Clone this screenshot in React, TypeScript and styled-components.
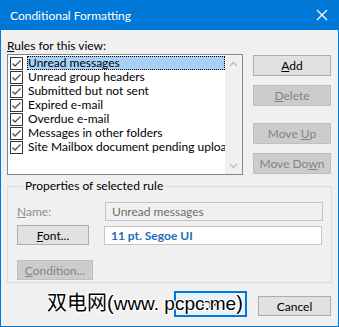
import styled, { createGlobalStyle } from "styled-components";

const Global = createGlobalStyle`
    html, body { margin:0; padding:0; background:#ffffff; }
    body { font-family:"Lato", "Liberation Sans", sans-serif; font-size:12px; color:#000; }
`;

const Window = styled.div`
    position:relative;
    width:339px;
    height:327px;
    box-sizing:border-box;
    border:1px solid #0078d7;
    border-top:0;
    background:#f0f0f0;
    display:flex;
    flex-direction:column;
`;

const TitleBar = styled.div`
    height:30px;
    margin:0 -1px;
    background:#0078d7;
    color:#fff;
    display:flex;
    align-items:center;
    justify-content:space-between;
    padding:0 11px 0 10px;
    font-size:12px;
`;

const Body = styled.div`
    padding:8px 6px 0 6px;
    display:flex;
    flex-direction:column;
`;

const TopRow = styled.div`
    display:flex;
`;

const ListColumn = styled.div`
    width:236px;
    display:flex;
    flex-direction:column;
`;

const Label = styled.div<{ $disabled?: boolean }>`
    height:16px;
    line-height:15px;
    color:${p => p.$disabled ? "#8d8d8d" : "#000"};
`;

const ListBox = styled.div`
    height:121px;
    box-sizing:border-box;
    border:1px solid #828790;
    background:#fff;
    display:flex;
`;

const Rows = styled.div`
    flex:1;
    min-width:0;
    padding:1px 0 0 2px;
    overflow:hidden;
`;

const Row = styled.div`
    height:14px;
    display:flex;
    align-items:center;
    white-space:nowrap;
    svg { flex-shrink:0; }
`;

const RowText = styled.span<{ $selected?: boolean }>`
    margin-left:4px;
    flex:1;
    min-width:0;
    overflow:hidden;
    height:14px;
    line-height:13px;
    padding-left:1px;
    box-sizing:border-box;
    background:${p => p.$selected ? "#a9d0f5" : "transparent"};
    outline:${p => p.$selected ? "1px dotted #000" : "none"};
    outline-offset:-1px;
`;

const ScrollBar = styled.div`
    width:17px;
    flex-shrink:0;
    background:#f0f0f0;
    display:flex;
    flex-direction:column;
    justify-content:space-between;
    align-items:center;
    padding:6px 0 5px;
`;

const ButtonColumn = styled.div`
    margin-left:10px;
    padding-top:17px;
    display:flex;
    flex-direction:column;
`;

const Button = styled.div<{ $disabled?: boolean; $w?: number; $h?: number; $gap?: number }>`
    width:${p => p.$w ?? 78}px;
    height:${p => p.$h ?? 21}px;
    margin-top:${p => p.$gap ?? 0}px;
    flex-shrink:0;
    box-sizing:border-box;
    border:1px solid ${p => p.$disabled ? "#bfbfbf" : "#adadad"};
    background:${p => p.$disabled ? "#cccccc" : "#e1e1e1"};
    color:${p => p.$disabled ? "#838383" : "#000"};
    display:flex;
    align-items:center;
    justify-content:center;
`;

const Group = styled.fieldset`
    margin:4px 0 0 0;
    padding:3px 8px 5px 9px;
    height:104px;
    box-sizing:border-box;
    border:1px solid #dcdcdc;
    display:flex;
    flex-direction:column;
`;

const Legend = styled.legend`
    padding:0 2px;
    margin-left:6px;
    line-height:14px;
`;

const FieldRow = styled.div<{ $gap?: number }>`
    display:flex;
    align-items:center;
    margin-top:${p => p.$gap ?? 0}px;
`;

const NameLabel = styled(Label)`
    width:88px;
`;

const Field = styled.div<{ $disabled?: boolean }>`
    width:218px;
    height:19px;
    box-sizing:border-box;
    display:flex;
    align-items:center;
    padding-left:6px;
    border:1px solid ${p => p.$disabled ? "#b2c8de" : "#c5c5c5"};
    background:${p => p.$disabled ? "#f0f0f0" : "#fff"};
    color:${p => p.$disabled ? "#6d6d6d" : "#1f6db8"};
    font-weight:${p => p.$disabled ? 400 : 700};
`;

const Footer = styled.div`
    display:flex;
    justify-content:flex-end;
    align-items:flex-end;
    gap:11px;
    padding:8px 1px 0 0;
`;

const OkButton = styled.div`
    width:73px;
    height:26px;
    box-sizing:border-box;
    border:2px solid #0078d7;
    background:#e5f1fb;
    display:flex;
    align-items:center;
    justify-content:center;
`;

const CancelButton = styled(Button)`
    margin-bottom:1px;
`;

const Watermark = styled.div`
    position:absolute;
    left:46px;
    top:289px;
    font-family:"Liberation Sans", "Noto Sans CJK SC", sans-serif;
    font-size:20px;
    line-height:28px;
    color:#000;
    white-space:nowrap;
    text-shadow:1px 0 #fff, -1px 0 #fff, 0 1px #fff, 0 -1px #fff, 1px 1px #fff, -1px -1px #fff, 1px -1px #fff, -1px 1px #fff;
`;

const WatermarkLatin = styled.span`
    font-size:19px;
`;

function Check() {
    return (
        <svg width="13" height="13" viewBox="0 0 13 13">
            <rect x="0.5" y="0.5" width="12" height="12" fill="#fff" stroke="#333" />
            <path d="M2.5 6.5 L5 9 L10.5 3.5" fill="none" stroke="#555" strokeWidth="1.4" />
        </svg>
    );
}

function Arrow({ up }: { up?: boolean }) {
    return (
        <svg width="9" height="6" viewBox="0 0 9 6">
            <path d={up ? "M1 5 L4.5 1.5 L8 5" : "M1 1 L4.5 4.5 L8 1"} fill="none" stroke="#c2c2c2" strokeWidth="1.6" />
        </svg>
    );
}

const rules = [
    "Unread messages",
    "Unread group headers",
    "Submitted but not sent",
    "Expired e-mail",
    "Overdue e-mail",
    "Messages in other folders",
    "Site Mailbox document pending upload",
];

export default function App() {
    return <>
        <Global />
        <Window>
            <TitleBar>
                <span>Conditional Formatting</span>
                <svg width="12" height="12" viewBox="0 0 12 12">
                    <path d="M1 1 L11 11 M11 1 L1 11" stroke="#fff" strokeWidth="1.2" />
                </svg>
            </TitleBar>
            <Body>
                <TopRow>
                    <ListColumn>
                        <Label><u>R</u>ules for this view:</Label>
                        <ListBox>
                            <Rows>
                                {rules.map((r, i) => (
                                    <Row key={r}>
                                        <Check />
                                        <RowText $selected={i === 0}>{r}</RowText>
                                    </Row>
                                ))}
                            </Rows>
                            <ScrollBar>
                                <Arrow up />
                                <Arrow />
                            </ScrollBar>
                        </ListBox>
                    </ListColumn>
                    <ButtonColumn>
                        <Button><span><u>A</u>dd</span></Button>
                        <Button $disabled $gap={9}><span><u>D</u>elete</span></Button>
                        <Button $disabled $gap={17}><span>Move <u>U</u>p</span></Button>
                        <Button $disabled $gap={9}><span>Move Do<u>w</u>n</span></Button>
                    </ButtonColumn>
                </TopRow>
                <Group>
                    <Legend>Properties of selected rule</Legend>
                    <FieldRow $gap={6}>
                        <NameLabel $disabled><u>N</u>ame:</NameLabel>
                        <Field $disabled>Unread messages</Field>
                    </FieldRow>
                    <FieldRow $gap={4}>
                        <Button $w={72} $h={20} style={{ marginRight: 15 }}><span><u>F</u>ont...</span></Button>
                        <Field>11 pt. Segoe UI</Field>
                    </FieldRow>
                    <FieldRow $gap={15}>
                        <Button $disabled $w={76} $h={20}><span><u>C</u>ondition...</span></Button>
                    </FieldRow>
                </Group>
                <Footer>
                    <OkButton>OK</OkButton>
                    <CancelButton $w={73} $h={20}>Cancel</CancelButton>
                </Footer>
            </Body>
            <Watermark>双电网(<WatermarkLatin>www. pcpc.me</WatermarkLatin>)</Watermark>
        </Window>
    </>;
}
